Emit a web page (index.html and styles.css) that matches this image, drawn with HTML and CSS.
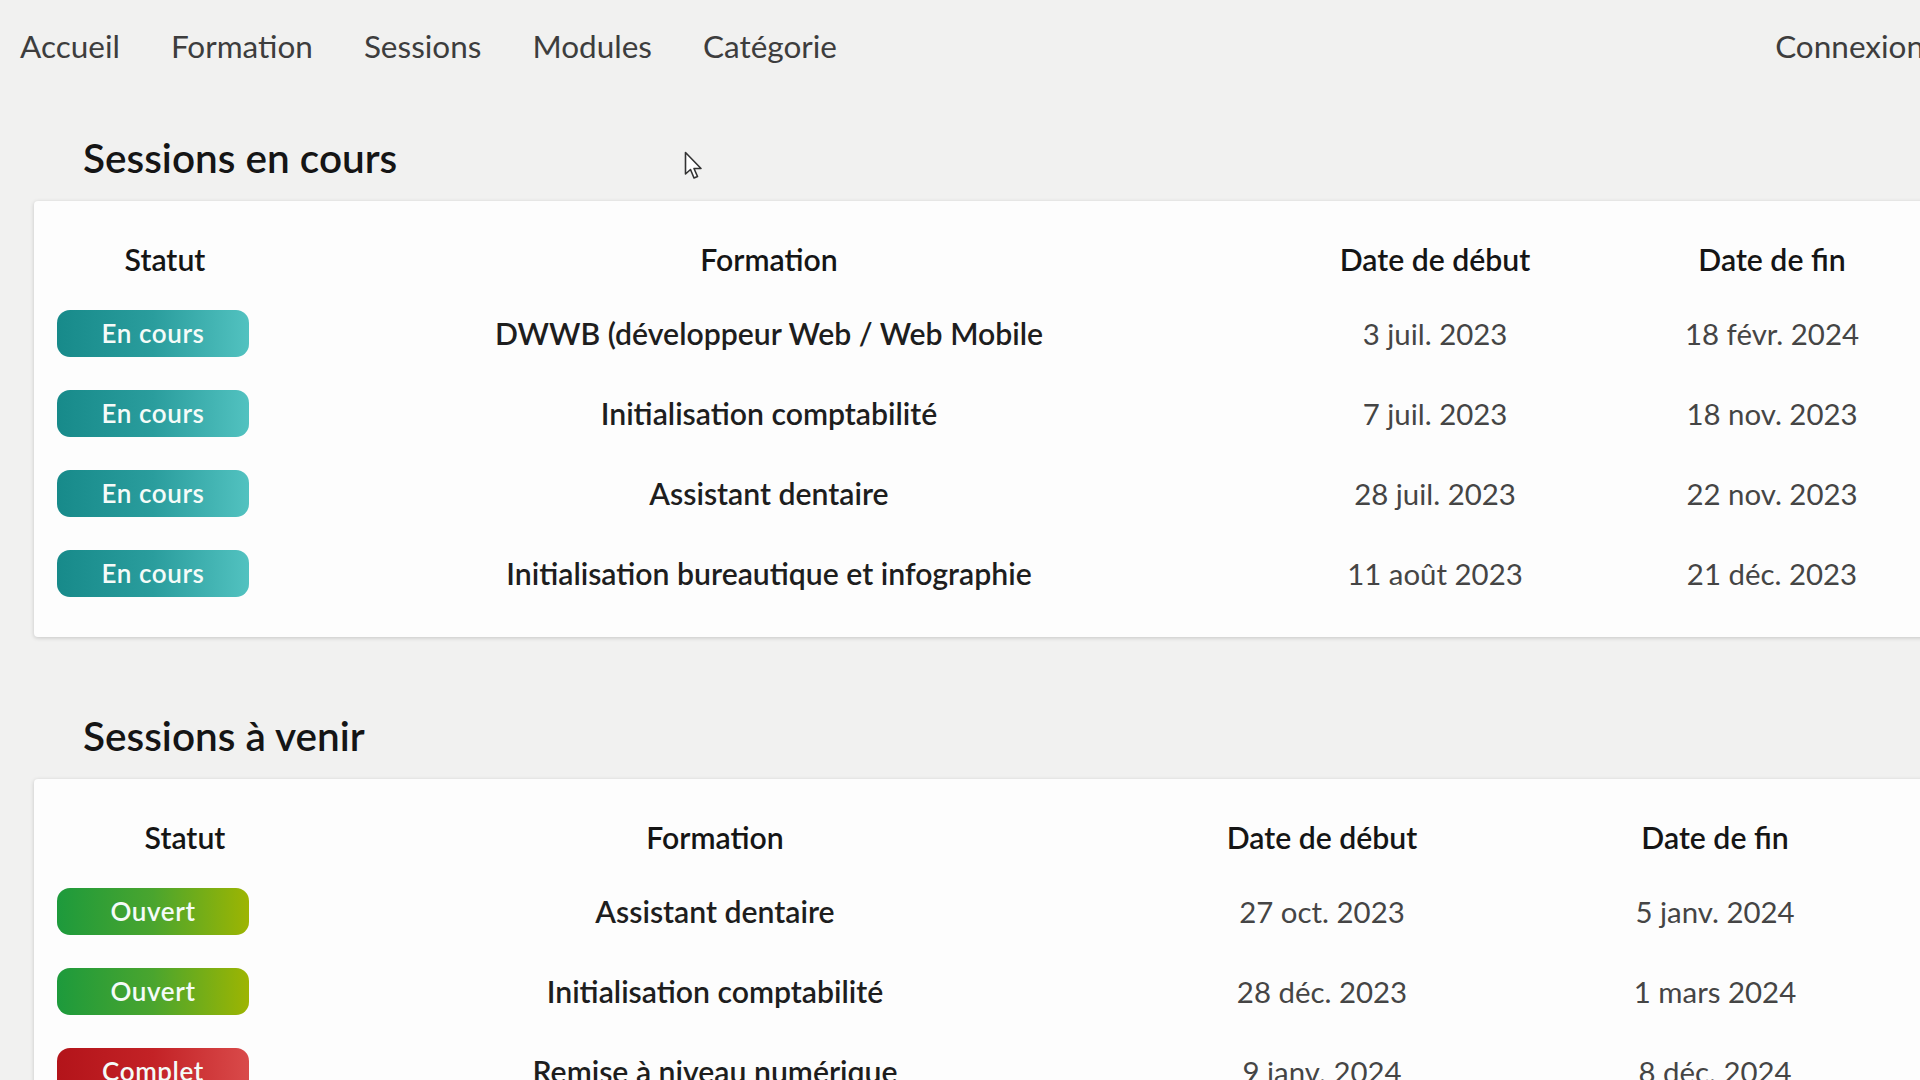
FILE: index.html
```html
<!DOCTYPE html>
<html lang="fr">
<head>
<meta charset="utf-8">
<title>Sessions</title>
<link rel="stylesheet" href="styles.css">
</head>
<body>
<div class="page">
  <nav class="nav">
    <a class="nav-link">Accueil</a>
    <a class="nav-link">Formation</a>
    <a class="nav-link">Sessions</a>
    <a class="nav-link">Modules</a>
    <a class="nav-link">Catégorie</a>
    <a class="nav-link nav-right">Connexion</a>
  </nav>

  <section class="section">
    <h2 class="section-title">Sessions en cours</h2>
    <div class="card">
      <table class="sessions">
        <colgroup>
          <col class="c1-a"><col class="c1-b"><col class="c1-c"><col class="c1-d">
        </colgroup>
        <thead>
          <tr><th>Statut</th><th>Formation</th><th>Date de début</th><th>Date de fin</th></tr>
        </thead>
        <tbody>
          <tr><td class="status"><span class="badge badge-cours">En cours</span></td><td class="name">DWWB (développeur Web / Web Mobile</td><td class="date">3 juil. 2023</td><td class="date">18 févr. 2024</td></tr>
          <tr><td class="status"><span class="badge badge-cours">En cours</span></td><td class="name">Initialisation comptabilité</td><td class="date">7 juil. 2023</td><td class="date">18 nov. 2023</td></tr>
          <tr><td class="status"><span class="badge badge-cours">En cours</span></td><td class="name">Assistant dentaire</td><td class="date">28 juil. 2023</td><td class="date">22 nov. 2023</td></tr>
          <tr><td class="status"><span class="badge badge-cours">En cours</span></td><td class="name">Initialisation bureautique et infographie</td><td class="date">11 août 2023</td><td class="date">21 déc. 2023</td></tr>
        </tbody>
      </table>
    </div>
  </section>

  <section class="section section-next">
    <h2 class="section-title">Sessions à venir</h2>
    <div class="card">
      <table class="sessions">
        <colgroup>
          <col class="c2-a"><col class="c2-b"><col class="c2-c"><col class="c2-d">
        </colgroup>
        <thead>
          <tr><th>Statut</th><th>Formation</th><th>Date de début</th><th>Date de fin</th></tr>
        </thead>
        <tbody>
          <tr><td class="status"><span class="badge badge-ouvert">Ouvert</span></td><td class="name">Assistant dentaire</td><td class="date">27 oct. 2023</td><td class="date">5 janv. 2024</td></tr>
          <tr><td class="status"><span class="badge badge-ouvert">Ouvert</span></td><td class="name">Initialisation comptabilité</td><td class="date">28 déc. 2023</td><td class="date">1 mars 2024</td></tr>
          <tr><td class="status"><span class="badge badge-complet">Complet</span></td><td class="name">Remise à niveau numérique</td><td class="date">9 janv. 2024</td><td class="date">8 déc. 2024</td></tr>
        </tbody>
      </table>
    </div>
  </section>

  <svg class="cursor" width="20" height="30" viewBox="0 0 20 30">
    <path d="M1.5 1.5 L1.5 23 L6.5 18.5 L10 27 L13.5 25.5 L10 17.5 L17 17.5 Z" fill="#ffffff" stroke="#333333" stroke-width="1.6" stroke-linejoin="round"/>
  </svg>
</div>
</body>
</html>
```

FILE: styles.css
```css
html, body {
  margin: 0;
  padding: 0;
  overflow: hidden;
}

body {
  background: #f1f1f0;
  font-family: "Lato", "Noto Sans", sans-serif;
  color: #222;
}

.page {
  position: relative;
  width: 1990px;
  height: 1080px;
}

.nav {
  display: flex;
  align-items: center;
  gap: 51px;
  height: 91px;
  padding: 0 0 2px 20px;
}

.nav-link {
  font-size: 31.5px;
  color: #3d3d3d;
  text-decoration: none;
}

.nav-right {
  margin-left: auto;
  margin-right: 66px;
}

.section {
  margin: 43px 0 0 34px;
}

.section-next {
  margin-top: 77px;
}

.section-title {
  margin: 0 0 21px 49px;
  font-size: 40.5px;
  line-height: 44px;
  font-weight: 600;
  color: #151515;
}

.card {
  background: #fdfdfd;
  border-radius: 4px;
  box-shadow: 0 1px 4px rgba(0, 0, 0, 0.18);
  padding: 24px 0;
}

.sessions {
  border-collapse: collapse;
  table-layout: fixed;
}

.c1-a { width: 262px; }
.c1-b { width: 946px; }
.c1-c { width: 386px; }
.c1-d { width: 288px; }

.c2-a { width: 302px; }
.c2-b { width: 758px; }
.c2-c { width: 456px; }
.c2-d { width: 330px; }

.sessions th {
  height: 68px;
  padding: 0;
  font-size: 30.2px;
  font-weight: 600;
  color: #151515;
  text-align: center;
}

.sessions td {
  height: 80px;
  padding: 0;
  text-align: center;
  font-size: 30.2px;
}

.sessions td.status {
  text-align: left;
  padding-left: 23px;
}

.sessions td.name {
  font-weight: 600;
  color: #1e1e1e;
}

.sessions td.date {
  font-size: 29.4px;
  color: #454545;
}

.badge {
  display: inline-flex;
  align-items: center;
  justify-content: center;
  width: 192px;
  height: 47px;
  border-radius: 13px;
  color: #f4fbf8;
  font-size: 26px;
  font-weight: 600;
  letter-spacing: 0.6px;
  vertical-align: middle;
}

.badge-cours {
  background: linear-gradient(90deg, #178a8a 0%, #2a9d9d 50%, #52c2c0 100%);
}

.badge-ouvert {
  background: linear-gradient(90deg, #1d9a3c 0%, #4aa52e 50%, #9db502 100%);
}

.badge-complet {
  background: linear-gradient(90deg, #b3141a 0%, #c32226 50%, #d94a4a 100%);
}

.cursor {
  position: absolute;
  left: 684px;
  top: 151px;
}
```
